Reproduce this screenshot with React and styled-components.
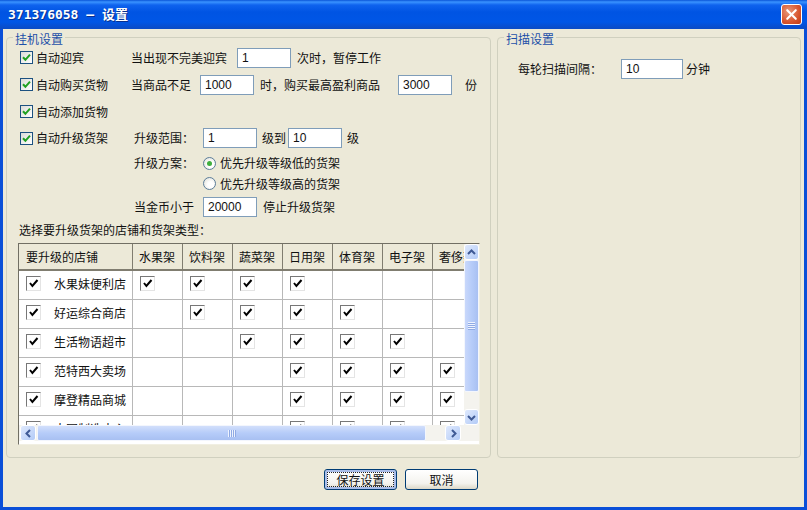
import React from "react";
import styled, { createGlobalStyle } from "styled-components";
import { X } from "lucide-react";

const GlobalStyle = createGlobalStyle`
  html, body {
    margin: 0;
    padding: 0;
    width: 807px;
    height: 510px;
    overflow: hidden;
    background: #ece9d8;
  }
  * {
    box-sizing: border-box;
  }
`;

const FONT = `"Noto Sans CJK SC", "Liberation Sans", sans-serif`;

const Window = styled.div`
  width: 807px;
  height: 510px;
  display: flex;
  flex-direction: column;
  background: #0a4fd8;
  font-family: ${FONT};
  font-size: 12px;
  line-height: 16px;
  color: #111;
`;

const TitleBar = styled.div`
  height: 29px;
  flex: none;
  padding: 0 5px 0 8px;
  display: flex;
  align-items: center;
  justify-content: space-between;
  background: linear-gradient(
    to bottom,
    #0a55d8 0,
    #3a93ff 2px,
    #0f63ee 5px,
    #0054e3 12px,
    #0056e6 22px,
    #0a4cc8 28px
  );
`;

const Title = styled.div`
  font-family: "DejaVu Sans Mono", ${FONT};
  font-size: 13px;
  font-weight: 700;
  color: #fff;
  text-shadow: 1px 1px 0 #0a2f8c;
`;

const CloseButton = styled.div`
  width: 21px;
  height: 21px;
  display: flex;
  align-items: center;
  justify-content: center;
  color: #fff;
  border: 1px solid #fff;
  border-radius: 3px;
  background: radial-gradient(circle at 35% 35%, #e8987a, #d8552e 60%, #c03a15);
`;

const Body = styled.div`
  flex: 1;
  margin: 0 3px 3px;
  padding: 8px 3px 0;
  background: #ece9d8;
  display: flex;
  flex-direction: column;
`;

const Groups = styled.div`
  display: flex;
  gap: 6px;
  height: 421px;
  flex: none;
`;

const Group = styled.fieldset`
  margin: 0;
  padding: ${({ $pad }) => $pad};
  width: ${({ $w }) => $w}px;
  flex: none;
  border: 1px solid #d0d0bf;
  border-radius: 4px;
  min-inline-size: 0;
  position: relative;
`;

const Legend = styled.span`
  position: absolute;
  left: 6px;
  top: -7px;
  padding: 0 2px;
  background: #ece9d8;
  color: #1d50a8;
`;

const Row = styled.div`
  display: flex;
  align-items: center;
  height: ${({ $h }) => $h}px;
  padding-left: ${({ $left }) => $left || 0}px;
`;

const Check = styled.span`
  width: 13px;
  height: 13px;
  flex: none;
  display: flex;
  align-items: center;
  justify-content: center;
  background: linear-gradient(135deg, #dcdcd7, #fff);
  border: 1px solid #1c5180;
`;

const GreenTick = () => (
  <svg width="9" height="9" viewBox="0 0 9 9">
    <path d="M1 4.2 L3.4 6.8 L8 1.6" fill="none" stroke="#21a121" strokeWidth="2" />
  </svg>
);

const CheckLabel = styled.span`
  width: ${({ $w }) => $w}px;
  flex: none;
  margin-left: 3px;
`;

const Text = styled.span`
  flex: none;
  width: ${({ $w }) => ($w ? `${$w}px` : "auto")};
  margin-left: ${({ $ml }) => $ml || 0}px;
  white-space: nowrap;
`;

const Input = styled.div`
  width: ${({ $w }) => $w || 54}px;
  height: 20px;
  flex: none;
  margin-left: ${({ $ml }) => $ml || 0}px;
  padding-left: 4px;
  background: #fff;
  border: 1px solid #7f9db9;
  font-family: "Liberation Sans", sans-serif;
  line-height: 19px;
`;

const Radio = styled.span`
  width: 13px;
  height: 13px;
  flex: none;
  border-radius: 50%;
  border: 1px solid #5b7d9a;
  background: radial-gradient(circle at 60% 60%, #fff 30%, #dcdcd2);
  display: flex;
  align-items: center;
  justify-content: center;

  &::after {
    content: "";
    display: ${({ $on }) => ($on ? "block" : "none")};
    width: 5px;
    height: 5px;
    border-radius: 50%;
    background: #3fae3f;
  }
`;

const TableFrame = styled.div`
  width: 462px;
  height: 202px;
  margin: 5px 0 0 11px;
  background: #fff;
  border: 1px solid #716f64;
  border-right-color: #f1efe2;
  border-bottom-color: #f1efe2;
  display: grid;
  grid-template-columns: 445px 15px;
  grid-template-rows: 181px 16px;
`;

const Viewport = styled.div`
  overflow: hidden;
`;

const GridTable = styled.div`
  display: grid;
  grid-template-columns: 114px repeat(7, 50px);
  grid-auto-rows: 29px;
`;

const HeadCell = styled.div`
  height: 27px;
  padding-left: ${({ $left }) => $left}px;
  display: flex;
  align-items: center;
  white-space: nowrap;
  overflow: hidden;
  background: #ece9d8;
  border-right: 1px solid #807d70;
  border-bottom: 2px solid #807d70;
`;

const Cell = styled.div`
  margin-top: -2px;
  height: 29px;
  padding: 0 0 3px 7px;
  display: flex;
  align-items: center;
  border-right: 1px solid #b8b8b8;
  border-bottom: 1px solid #b8b8b8;
`;

const NameCell = styled(Cell)`
  gap: 13px;
`;

const GridCheck = styled.span`
  width: 15px;
  height: 15px;
  flex: none;
  display: flex;
  align-items: center;
  justify-content: center;
  background: #fff;
  border: 1px solid;
  border-color: #777 #e4e4e4 #e4e4e4 #777;
`;

const BlackTick = () => (
  <svg width="11" height="11" viewBox="0 0 11 11">
    <path d="M2 5 L4.4 8 L9.5 2" fill="none" stroke="#000" strokeWidth="2" />
  </svg>
);

const ScrollTrack = styled.div`
  background: #f4f3ee;
  display: flex;
  flex-direction: ${({ $vertical }) => ($vertical ? "column" : "row")};
  padding: ${({ $vertical }) => ($vertical ? "0" : "0 3px 0 1px")};
`;

const ScrollGap = styled.div`
  flex: 1;
`;

const ScrollButton = styled.div`
  width: ${({ $vertical }) => ($vertical ? "100%" : "16px")};
  height: ${({ $vertical }) => ($vertical ? "16px" : "100%")};
  flex: none;
  display: flex;
  align-items: center;
  justify-content: center;
  background: linear-gradient(135deg, #dfe9fd, #b3cbf7);
  border: 1px solid #fff;
  border-radius: 3px;
  color: #3f5a95;
`;

const ScrollThumb = styled.div`
  display: flex;
  align-items: center;
  justify-content: center;
  width: ${({ $vertical, $size }) => ($vertical ? "100%" : `${$size}px`)};
  height: ${({ $vertical, $size }) => ($vertical ? `${$size}px` : "100%")};
  margin: ${({ $vertical }) => ($vertical ? "0" : "0 0 0 1px")};
  flex: none;
  background: ${({ $vertical }) =>
    $vertical
      ? "linear-gradient(to right, #c9d8fb, #b6ccf9 50%, #a8c0f2)"
      : "linear-gradient(to bottom, #d2dffb, #b6ccf9 50%, #a8c0f2)"};
  border: 1px solid #f3f6fd;
  border-radius: 2px;
`;

const Grip = styled.div`
  width: ${({ $vertical }) => ($vertical ? "7px" : "8px")};
  height: ${({ $vertical }) => ($vertical ? "8px" : "7px")};
  background: repeating-linear-gradient(
    ${({ $vertical }) => ($vertical ? "to bottom" : "to right")},
    #eef3fe 0,
    #eef3fe 1px,
    #8faae4 1px,
    #8faae4 2px
  );
`;

const ScrollCorner = styled.div`
  background: #f4f3ee;
`;

const Chevron = ({ d }) => (
  <svg width="9" height="9" viewBox="0 0 9 9">
    <path d={d} fill="none" stroke="currentColor" strokeWidth="2" />
  </svg>
);

const Footer = styled.div`
  flex: 1;
  display: flex;
  justify-content: center;
  align-items: flex-start;
  gap: 8px;
  padding: 11px 5px 0 0;
`;

const Button = styled.div`
  width: 73px;
  height: 21px;
  display: flex;
  align-items: center;
  justify-content: center;
  background: linear-gradient(to bottom, #fff, #f4f3ee 70%, #dcd8c8);
  border: 1px solid #003c74;
  border-radius: 3px;
  box-shadow: ${({ $primary }) => ($primary ? "inset 0 0 0 2px #a9bde9" : "none")};
  outline: ${({ $primary }) => ($primary ? "1px dotted #222" : "none")};
  outline-offset: -4px;
`;

const COLUMNS = ["水果架", "饮料架", "蔬菜架", "日用架", "体育架", "电子架", "奢侈架"];

const SHOPS = [
  { name: "水果妹便利店", checks: [1, 1, 1, 1, 0, 0, 0] },
  { name: "好运综合商店", checks: [0, 1, 1, 1, 1, 0, 0] },
  { name: "生活物语超市", checks: [0, 0, 1, 1, 1, 1, 0] },
  { name: "范特西大卖场", checks: [0, 0, 0, 1, 1, 1, 1] },
  { name: "摩登精品商城", checks: [0, 0, 0, 1, 1, 1, 1] },
  { name: "大国制造中心", checks: [0, 0, 0, 1, 1, 1, 1] },
];

const App = () => (
  <Window>
    <GlobalStyle />
    <TitleBar>
      <Title>371376058 – 设置</Title>
      <CloseButton>
        <X size={17} strokeWidth={3} />
      </CloseButton>
    </TitleBar>
    <Body>
      <Groups>
        <Group $w={485} $pad="6px 0 0 0">
          <Legend>挂机设置</Legend>
          <Row $h={27} $left={13}>
            <Check><GreenTick /></Check>
            <CheckLabel $w={95}>自动迎宾</CheckLabel>
            <Text $w={106}>当出现不完美迎宾</Text>
            <Input>1</Input>
            <Text $ml={6}>次时，暂停工作</Text>
          </Row>
          <Row $h={27} $left={13}>
            <Check><GreenTick /></Check>
            <CheckLabel $w={95}>自动购买货物</CheckLabel>
            <Text $w={69}>当商品不足</Text>
            <Input>1000</Input>
            <Text $w={138} $ml={6}>时，购买最高盈利商品</Text>
            <Input>3000</Input>
            <Text $ml={13}>份</Text>
          </Row>
          <Row $h={27} $left={13}>
            <Check><GreenTick /></Check>
            <CheckLabel $w={95}>自动添加货物</CheckLabel>
          </Row>
          <Row $h={26} $left={13}>
            <Check><GreenTick /></Check>
            <CheckLabel $w={98}>自动升级货架</CheckLabel>
            <Text $w={69}>升级范围：</Text>
            <Input>1</Input>
            <Text $w={26} $ml={5}>级到</Text>
            <Input>10</Input>
            <Text $ml={5}>级</Text>
          </Row>
          <Row $h={24} $left={127}>
            <Text $w={69}>升级方案：</Text>
            <Radio $on />
            <Text $ml={4}>优先升级等级低的货架</Text>
          </Row>
          <Row $h={17} $left={196}>
            <Radio />
            <Text $ml={4}>优先升级等级高的货架</Text>
          </Row>
          <Row $h={30} $left={127}>
            <Text $w={69}>当金币小于</Text>
            <Input>20000</Input>
            <Text $ml={6}>停止升级货架</Text>
          </Row>
          <Row $h={16} $left={12}>
            <Text>选择要升级货架的店铺和货架类型：</Text>
          </Row>
          <TableFrame>
            <Viewport>
              <GridTable>
                <HeadCell $left={7}>要升级的店铺</HeadCell>
                {COLUMNS.map(col => (
                  <HeadCell key={col} $left={6}>{col}</HeadCell>
                ))}
                {SHOPS.map(shop => (
                  <React.Fragment key={shop.name}>
                    <NameCell>
                      <GridCheck><BlackTick /></GridCheck>
                      <span>{shop.name}</span>
                    </NameCell>
                    {shop.checks.map((on, i) => (
                      <Cell key={COLUMNS[i]}>
                        {on ? <GridCheck><BlackTick /></GridCheck> : null}
                      </Cell>
                    ))}
                  </React.Fragment>
                ))}
              </GridTable>
            </Viewport>
            <ScrollTrack $vertical>
              <ScrollButton $vertical><Chevron d="M1 6 L4.5 2.5 L8 6" /></ScrollButton>
              <ScrollThumb $vertical $size={132}><Grip $vertical /></ScrollThumb>
              <ScrollGap />
              <ScrollButton $vertical><Chevron d="M1 3 L4.5 6.5 L8 3" /></ScrollButton>
            </ScrollTrack>
            <ScrollTrack>
              <ScrollButton><Chevron d="M6 1 L2.5 4.5 L6 8" /></ScrollButton>
              <ScrollThumb $size={389}><Grip /></ScrollThumb>
              <ScrollGap />
              <ScrollButton><Chevron d="M3 1 L6.5 4.5 L3 8" /></ScrollButton>
            </ScrollTrack>
            <ScrollCorner />
          </TableFrame>
        </Group>
        <Group $w={304} $pad="21px 0 0 20px">
          <Legend>扫描设置</Legend>
          <Row $h={20}>
            <Text $w={103}>每轮扫描间隔：</Text>
            <Input $w={62}>10</Input>
            <Text $ml={3}>分钟</Text>
          </Row>
        </Group>
      </Groups>
      <Footer>
        <Button $primary>保存设置</Button>
        <Button>取消</Button>
      </Footer>
    </Body>
  </Window>
);

export default App;
